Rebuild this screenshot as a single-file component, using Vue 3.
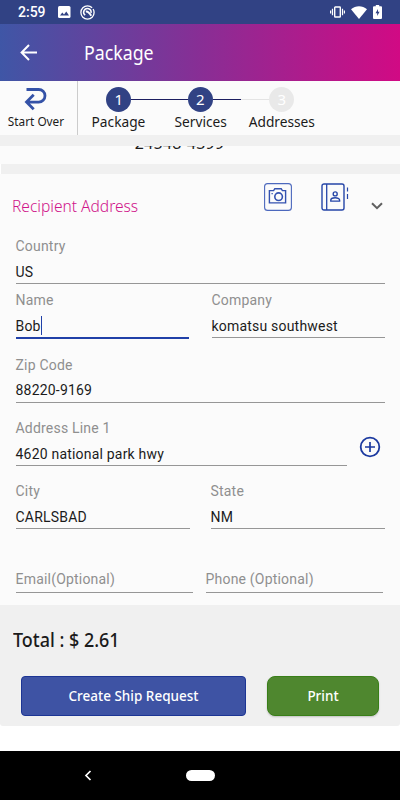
<template>
    <div class="screen">
        <div class="status-bar">
            <span class="clock">2:59</span>
            <svg class="status-image" width="13" height="12" viewBox="0 0 13 12">
                <rect width="12.5" height="12" rx="1.5" fill="#fff" />
                <path d="M2 9.5 4.3 6.5 6 8.4 8.3 5.4 11 9.5z" fill="#314284" />
            </svg>
            <svg class="status-circle" width="15" height="15" viewBox="0 0 15 15" fill="none" stroke="#fff">
                <circle cx="7.5" cy="7.5" r="6.6" stroke-width="1.3" stroke-dasharray="36 1.5" />
                <path d="M5.2 10.2A3.7 3.7 0 1 1 11 8" stroke-width="1.5" />
                <path d="M5.8 6.6q2.6-.5 5.4 4.2" stroke-width="2" />
            </svg>
            <div class="status-right">
                <svg width="15" height="12" viewBox="0 0 15 12" fill="none" stroke="#fff">
                    <rect x="4.7" y="1" width="5.6" height="10" rx="0.5" stroke-width="1.4" />
                    <path d="M2.5 2.7v6.6M12.5 2.7v6.6M.6 4.5v3M14.4 4.5v3" stroke-width="1.2" />
                </svg>
                <svg width="16" height="13" viewBox="0 0 16 13">
                    <path d="M0 3.2C4.6-.8 11.4-.8 16 3.2L8 13z" fill="#fff" />
                </svg>
                <svg width="9" height="14" viewBox="0 0 9 14">
                    <path d="M2.8 0h3.4v1.3H8q1 0 1 1V13q0 1-1 1H1q-1 0-1-1V2.3q0-1 1-1h1.8z" fill="#fff" />
                    <path d="M5 4 2.5 8.2h1.7V11l2.4-4.2H5z" fill="#314284" />
                </svg>
            </div>
        </div>

        <header class="app-bar">
            <svg width="18" height="17" viewBox="0 0 18 17" fill="none" stroke="#fff" stroke-width="2">
                <path d="M17 8.5H2M9 1 1.6 8.5 9 16" />
            </svg>
            <h1>Package</h1>
        </header>

        <div class="stepper">
            <div class="start-over">
                <svg width="24" height="28" viewBox="0 0 24 28" fill="none" stroke="#3452a7" stroke-width="2.8">
                    <path d="M2.5 3.5h12.2a6.3 6.3 0 0 1 0 12.6H3M9.7 8.8 2.5 16.1l7.2 7.2" />
                </svg>
                <span>Start Over</span>
            </div>
            <div v-for="(step, i) in steps" :key="step.label" class="step">
                <div class="step-track">
                    <i :class="['line', step.before]"></i>
                    <b :class="['dot', { done: step.done }]">{{ i + 1 }}</b>
                    <i :class="['line', step.after]"></i>
                </div>
                <span class="step-label">{{ step.label }}</span>
            </div>
        </div>

        <div class="divider first"></div>
        <div class="scrolled"><span>24548-4399</span></div>
        <div class="divider second"></div>

        <main class="recipient">
            <div class="section-head">
                <h2>Recipient Address</h2>
                <svg class="camera" width="28" height="28" viewBox="0 0 28 28" fill="none" stroke="#3452b0">
                    <rect x="0.6" y="0.6" width="26.8" height="26.8" rx="3" stroke="#4c68bd" stroke-width="1.1" />
                    <path d="M5.4 7.6h4.2l1.2-1.9h6.4l1.2 1.9h3.2v12.3H5.4z" stroke-width="1.4" />
                    <circle cx="14.6" cy="13.7" r="3.8" stroke-width="1.6" />
                    <path d="M7.5 10.6h1.3" stroke-width="1.3" />
                </svg>
                <svg class="contacts" width="28" height="28" viewBox="0 0 28 28" fill="none" stroke="#2646a8">
                    <rect x="1" y="1" width="22" height="26" rx="2" stroke-width="1.4" />
                    <path d="M5.7 1v26" stroke-width="1.3" />
                    <circle cx="14.2" cy="10.9" r="2" stroke-width="1.4" />
                    <path d="M9.8 18.1v-1c0-3.2 8.8-3.2 8.8 0v1z" stroke-width="1.4" />
                    <path d="M26.5 4.5v4M26.5 11v5" stroke-width="1.2" />
                </svg>
                <svg class="chevron" width="12" height="8" viewBox="0 0 12 8" fill="none" stroke="#606060" stroke-width="2">
                    <path d="m1 1.2 5 5 5-5" />
                </svg>
            </div>

            <div v-for="row in rows" :key="row.name" :class="['row', row.name]">
                <div v-for="field in row.fields" :key="field.label" :class="['field', { focused: field.focused }]">
                    <label>{{ field.label }}</label>
                    <div v-if="field.value" class="value">{{ field.value }}<i v-if="field.focused" class="caret"></i></div>
                </div>
                <svg v-if="row.name === 'address'" class="add" width="22" height="22" viewBox="0 0 22 22" fill="none" stroke="#1c3aa0">
                    <circle cx="11" cy="11" r="9.3" stroke-width="1.8" />
                    <path d="M11 6v10M6 11h10" stroke-width="1.7" />
                </svg>
            </div>
        </main>

        <footer class="summary">
            <div class="total"><span>Total : $ 2.61</span></div>
            <div class="actions">
                <button class="ship"><span>Create Ship Request</span></button>
                <button class="print"><span>Print</span></button>
            </div>
        </footer>

        <nav class="nav-bar">
            <svg width="8" height="11" viewBox="0 0 8 11" fill="none" stroke="#fff" stroke-width="1.7">
                <path d="M6.5 1 2 5.5 6.5 10" />
            </svg>
            <div class="home"></div>
        </nav>
    </div>
</template>

<script setup>
    const steps = [
        { label: 'Package', done: true, before: '', after: 'active' },
        { label: 'Services', done: true, before: 'active', after: 'active' },
        { label: 'Addresses', done: false, before: 'pending', after: '' }
    ];

    const rows = [
        { name: 'country', fields: [{ label: 'Country', value: 'US' }] },
        {
            name: 'person',
            fields: [
                { label: 'Name', value: 'Bob', focused: true },
                { label: 'Company', value: 'komatsu southwest' }
            ]
        },
        { name: 'zip', fields: [{ label: 'Zip Code', value: '88220-9169' }] },
        { name: 'address', fields: [{ label: 'Address Line 1', value: '4620 national park hwy' }] },
        {
            name: 'city',
            fields: [
                { label: 'City', value: 'CARLSBAD' },
                { label: 'State', value: 'NM' }
            ]
        },
        { name: 'contact', fields: [{ label: 'Email(Optional)' }, { label: 'Phone (Optional)' }] }
    ];
</script>

<style>
    body {
        margin: 0;
    }
</style>

<style scoped>
    .screen {
        display: flex;
        flex-direction: column;
        width: 400px;
        height: 800px;
        overflow: hidden;
        background: #fff;
        color: #1b1b1b;
        font-family: "Noto Sans", sans-serif;
        white-space: nowrap;
    }

    svg {
        display: block;
        flex-shrink: 0;
    }

    .status-bar {
        display: flex;
        align-items: center;
        height: 24px;
        box-sizing: border-box;
        padding: 0 18px 0 18px;
        background: #314284;
        color: #fff;
    }

    .clock {
        width: 40px;
        font: 500 14px/25px Roboto, sans-serif;
    }

    .status-circle {
        margin-left: 9px;
    }

    .status-right {
        display: flex;
        align-items: center;
        gap: 6px;
        margin-left: auto;
    }

    .app-bar {
        display: flex;
        align-items: center;
        height: 57px;
        box-sizing: border-box;
        padding: 0 0 0 20px;
        background: linear-gradient(90deg, #3f56a6, #882e95 50%, #d10a84);
        color: #fff;
    }

    .app-bar h1 {
        margin: 0 0 0 46px;
        font-size: 19.5px;
        font-weight: 400;
        transform: scaleX(0.91);
        transform-origin: left;
    }

    .stepper {
        display: flex;
        height: 54px;
        background: #fbfbfb;
    }

    .start-over {
        display: flex;
        flex-direction: column;
        align-items: center;
        width: 78px;
        box-sizing: border-box;
        padding: 5px 5px 0 0;
        border-right: 1px solid #ccc;
        font-size: 11.8px;
        line-height: 16px;
    }

    .start-over span {
        margin-top: -1px;
    }

    .step {
        display: flex;
        flex-direction: column;
        width: 81.5px;
        padding-top: 6px;
        align-items: center;
    }

    .step-track {
        display: flex;
        align-items: center;
        width: 100%;
    }

    .line {
        flex: 1;
        height: 1px;
    }

    .line.active {
        background: #1c1e60;
    }

    .line.pending {
        background: #e4e4e4;
    }

    .dot {
        width: 25px;
        height: 25px;
        border-radius: 50%;
        background: #e9e9e9;
        color: #fff;
        font-size: 15px;
        font-weight: 400;
        line-height: 25px;
        text-align: center;
    }

    .dot.done {
        background: #314284;
    }

    .step-label {
        font-size: 14px;
        line-height: 20px;
        transform: scaleX(0.98);
    }

    .divider {
        background: #f0f0f0;
    }

    .divider.first {
        height: 11px;
    }

    .divider.second {
        height: 10px;
        margin-left: 1px;
    }

    .scrolled {
        display: flex;
        align-items: flex-start;
        justify-content: center;
        height: 18px;
        padding-right: 41px;
        overflow: hidden;
        background: #fbfbfb;
    }

    .scrolled span {
        margin-top: -13px;
        font-size: 16px;
        line-height: 20px;
        letter-spacing: 0.2px;
    }

    .recipient {
        height: 431px;
        background: #fbfbfb;
        font-family: Roboto, sans-serif;
    }

    .section-head {
        display: flex;
        align-items: flex-start;
        height: 63px;
        box-sizing: border-box;
        padding: 9px 17px 0 12px;
    }

    .section-head h2 {
        width: 252px;
        margin: 12px 0 0;
        color: #d0148a;
        font: 300 17px/22px "Noto Sans", sans-serif;
        transform: scaleX(0.915);
        transform-origin: left;
    }

    .contacts {
        margin-left: 29px;
    }

    .chevron {
        margin: 19px 0 0 auto;
    }

    .row {
        display: flex;
        justify-content: space-between;
        padding: 0 15px 0 15.5px;
    }

    .row.person {
        height: 47px;
        margin-top: 7px;
    }

    .row.zip {
        margin-top: 18px;
    }

    .row.address,
    .row.city {
        margin-top: 16px;
    }

    .row.contact {
        margin-top: 41px;
        padding-right: 17px;
    }

    .field {
        flex: 1;
        height: 47px;
        box-sizing: border-box;
        border-bottom: 1px solid #969696;
        font-size: 14px;
        letter-spacing: 0.2px;
    }

    .field label {
        display: block;
        color: #8f8f8f;
        line-height: 18px;
    }

    .value {
        display: flex;
        align-items: center;
        height: 20px;
        margin-top: 7px;
    }

    .zip .value {
        margin-top: 6px;
    }

    .field.focused {
        height: 48px;
        border-bottom: 2px solid #2040a8;
    }

    .caret {
        width: 1.5px;
        height: 19px;
        margin-top: -2px;
        background: #2040a8;
    }

    .person .field {
        flex: 0 0 173.5px;
    }

    .city .field {
        flex: 0 0 174.5px;
    }

    .address .field {
        flex: 0 0 331px;
    }

    .add {
        margin: 17px 4px 0 0;
    }

    .contact .field {
        flex: 0 0 177.5px;
        height: 23px;
    }

    .summary {
        height: 121px;
        border-radius: 0 0 3px 3px;
        background: #f0f0f0;
    }

    .total {
        height: 70px;
        box-sizing: border-box;
        padding: 10px 0 0 13px;
        font-size: 19.5px;
        font-weight: 500;
        line-height: 50px;
    }

    .total span {
        display: inline-block;
        transform: scaleX(0.92);
        transform-origin: left;
    }

    .actions {
        display: flex;
        gap: 21px;
        padding: 1px 21px 0;
    }

    button {
        height: 40px;
        padding: 0;
        border: 1px solid #1c3594;
        border-radius: 4px;
        background: #3e53a4;
        color: #fff;
        font: 500 13.5px "Noto Sans", sans-serif;
    }

    .ship {
        width: 225px;
    }

    .print {
        width: 112px;
        border-color: #397f18;
        border-radius: 8px;
        background: #4f872f;
        box-shadow: 0 1px 2px rgba(0, 0, 0, 0.2);
    }

    .nav-bar {
        display: flex;
        align-items: center;
        height: 49px;
        box-sizing: border-box;
        margin-top: 25px;
        padding-left: 84px;
        background: #000;
    }

    .home {
        width: 29px;
        height: 11px;
        margin-left: 94px;
        border-radius: 6px;
        background: #fff;
    }
</style>
